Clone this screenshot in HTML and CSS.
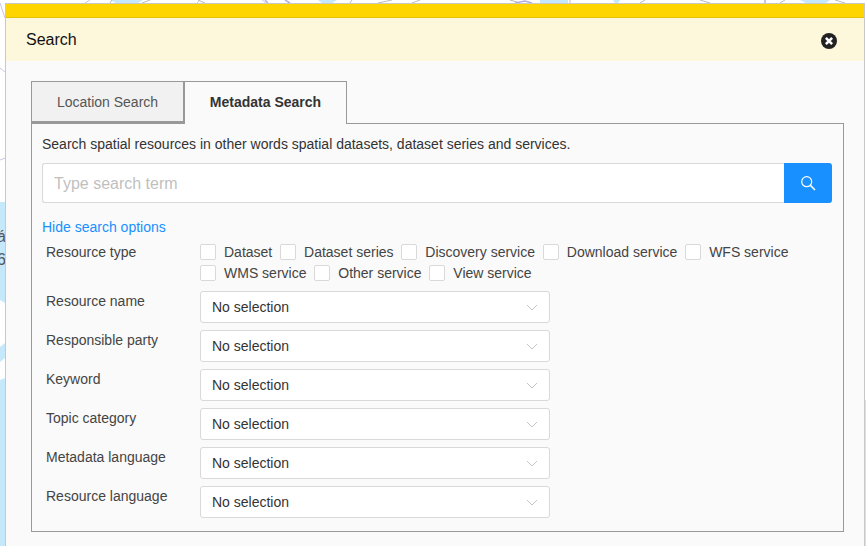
FILE: index.html
```html
<!DOCTYPE html>
<html lang="en">
<head>
  <meta charset="UTF-8">
  <title>Search</title>
  <link rel="stylesheet" href="styles.css">
</head>
<body>

  <svg class="map" width="866" height="546" viewBox="0 0 866 546">
    <path class="water" d="M0 202 L5 202 L5 303 L0 300 Z"/>
    <path class="water" d="M0 347 L5 343 L5 358 L0 362 Z"/>
    <path class="water" d="M0 380 L5 378 L5 546 L0 546 Z"/>
    <path class="water" d="M110 0 L143 0 L138 3 L116 3 Z"/>
    <path class="water" d="M318 0 L337 0 L332 3 L322 3 Z"/>
    <path class="water" d="M540 0 L568 0 L568 3 L540 3 Z"/>
    <path class="water" d="M613 0 L620 0 L618 3 L615 3 Z"/>
    <path class="water" d="M800 0 L830 0 L826 3 L806 3 Z"/>
    <path class="water" d="M865 400 L866 400 L866 546 L865 546 Z"/>
    <path class="road" d="M0 3 L5 18 M0 68 L5 72 M0 160 L5 158 M0 236 L5 232 M85 3 L90 0 M197 3 L200 0 M262 0 L266 3"/>
    <path class="road-grey" d="M110 3 L112 0 M142 3 L150 0 M205 3 L198 0 M350 3 L352 0 M378 3 L392 0 M412 3 L420 0 M520 3 L510 0 M570 3 L570 0 M640 3 L645 0 M710 3 L700 0 M780 3 L785 0 M845 3 L835 0"/>
    <path class="road-lilac" d="M265 0 L268 3 M285 0 L290 3 M515 3 L525 1 L532 3 M765 0 L765 3"/>
    <text class="map-label" x="-3" y="242">á</text>
    <text class="map-label" x="-3" y="265">6</text>
  </svg>

  <div class="modal">
    <div class="modal-bar"></div>
    <div class="modal-header">
      <span class="modal-title">Search</span>
      <svg class="close-icon" width="16" height="16" viewBox="0 0 16 16">
        <circle cx="8" cy="8" r="8" fill="#222"/>
        <path d="M4.9 4.9 L11.1 11.1 M11.1 4.9 L4.9 11.1" stroke="#fff" stroke-width="2.6"/>
      </svg>
    </div>

    <div class="modal-body">
      <div class="tabs">
        <div class="tab">Location Search</div>
        <div class="tab tab-active">Metadata Search</div>
      </div>

      <div class="panel">
        <p class="intro">Search spatial resources in other words spatial datasets, dataset series and services.</p>

        <div class="search-row">
          <input class="search-input" type="text" placeholder="Type search term">
          <button class="search-btn">
            <svg width="16" height="16" viewBox="0 0 16 16" fill="none" stroke="#fff" stroke-width="1.2">
              <circle cx="6.7" cy="6.7" r="5"/>
              <path d="M10.4 10.4 L15 15" stroke-width="1.5"/>
            </svg>
          </button>
        </div>

        <a class="toggle-link" href="#">Hide search options</a>

        <div class="option-row option-types">
          <label class="option-label">Resource type</label>
          <div class="checks">
            <span class="check"><i></i>Dataset</span>
            <span class="check"><i></i>Dataset series</span>
            <span class="check"><i></i>Discovery service</span>
            <span class="check"><i></i>Download service</span>
            <span class="check"><i></i>WFS service</span>
            <span class="check"><i></i>WMS service</span>
            <span class="check"><i></i>Other service</span>
            <span class="check"><i></i>View service</span>
          </div>
        </div>

        <div class="option-row">
          <label class="option-label">Resource name</label>
          <div class="select">No selection<svg width="12" height="7" viewBox="0 0 12 7"><path d="M1 1 L6 6 L11 1" fill="none" stroke="#c4c4c4"/></svg></div>
        </div>
        <div class="option-row">
          <label class="option-label">Responsible party</label>
          <div class="select">No selection<svg width="12" height="7" viewBox="0 0 12 7"><path d="M1 1 L6 6 L11 1" fill="none" stroke="#c4c4c4"/></svg></div>
        </div>
        <div class="option-row">
          <label class="option-label">Keyword</label>
          <div class="select">No selection<svg width="12" height="7" viewBox="0 0 12 7"><path d="M1 1 L6 6 L11 1" fill="none" stroke="#c4c4c4"/></svg></div>
        </div>
        <div class="option-row">
          <label class="option-label">Topic category</label>
          <div class="select">No selection<svg width="12" height="7" viewBox="0 0 12 7"><path d="M1 1 L6 6 L11 1" fill="none" stroke="#c4c4c4"/></svg></div>
        </div>
        <div class="option-row">
          <label class="option-label">Metadata language</label>
          <div class="select">No selection<svg width="12" height="7" viewBox="0 0 12 7"><path d="M1 1 L6 6 L11 1" fill="none" stroke="#c4c4c4"/></svg></div>
        </div>
        <div class="option-row">
          <label class="option-label">Resource language</label>
          <div class="select">No selection<svg width="12" height="7" viewBox="0 0 12 7"><path d="M1 1 L6 6 L11 1" fill="none" stroke="#c4c4c4"/></svg></div>
        </div>
      </div>
    </div>
  </div>

</body>
</html>
```

FILE: styles.css
```css
html, body {
  height: 100%;
}
body {
  margin: 0;
  background: #fff;
  font-family: "Liberation Sans", Arial, sans-serif;
  font-size: 14px;
  color: #333;
  overflow: hidden;
}
.map {
  position: absolute;
  left: 0;
  top: 0;
}
.water {
  fill: #c5e8fb;
}
.road {
  fill: none;
  stroke: #c9c6e6;
  stroke-width: 1;
}
.road-grey {
  fill: none;
  stroke: #bbb;
  stroke-width: 1;
}
.road-lilac {
  fill: none;
  stroke: #b4aee8;
  stroke-width: 1.5;
}
.map-label {
  font-size: 16px;
  fill: #555;
}
.modal {
  position: absolute;
  left: 5px;
  top: 3px;
  width: 858px;
  height: 543px;
  border: 1px solid #c8c8c8;
  border-bottom: none;
  background: #fafafa;
}
.modal-bar {
  height: 13px;
  background: #ffd500;
  border-bottom: 1px solid #e6c200;
}
.modal-header {
  height: 43px;
  background: #fdf7db;
  display: flex;
  align-items: center;
  justify-content: space-between;
  padding: 0 27px 0 20px;
}
.modal-title {
  font-size: 16px;
  color: #111;
}
.close-icon {
  margin-top: 3px;
}
.modal-body {
  padding: 20px 20px 0 25px;
}
.tabs {
  display: flex;
  margin-bottom: -1px;
  position: relative;
}
.tab {
  width: 154px;
  height: 42px;
  box-sizing: border-box;
  line-height: 41px;
  text-align: center;
  background: #f1f1f1;
  color: #555;
  border: 1px solid #999;
  border-bottom-width: 2px;
  border-right-width: 2px;
}
.tab-active {
  width: 162px;
  border-left: none;
  border-right-width: 1px;
  border-bottom: none;
  height: 43px;
  background: #fafafa;
  color: #333;
  font-weight: bold;
}
.panel {
  box-sizing: border-box;
  width: 813px;
  height: 409px;
  border: 1px solid #999;
  padding: 12px 10px 0;
}
.intro {
  margin: 0 0 11px;
  line-height: 16px;
}
.search-row {
  display: flex;
  width: 790px;
  height: 40px;
}
.search-input {
  flex: 1;
  box-sizing: border-box;
  height: 40px;
  border: 1px solid #d9d9d9;
  border-right: none;
  border-radius: 3px 0 0 3px;
  padding: 2px 11px 0;
  font-family: inherit;
  font-size: 16px;
  background: #fff;
  outline: none;
}
.search-input::placeholder {
  color: #bfbfbf;
  opacity: 1;
}
.search-btn {
  width: 48px;
  height: 40px;
  border: none;
  padding: 0;
  background: #1890ff;
  border-radius: 0 3px 3px 0;
  display: flex;
  align-items: center;
  justify-content: center;
}
.toggle-link {
  display: block;
  margin-top: 16px;
  line-height: 16px;
  color: #1890ff;
  text-decoration: none;
}
.option-row {
  display: flex;
  margin-top: 7px;
  padding-left: 4px;
}
.option-types {
  margin-top: 9px;
  margin-bottom: 10px;
}
.option-label {
  width: 154px;
  flex: none;
  line-height: 16px;
  margin-top: 2px;
  color: #444;
}
.option-types .option-label {
  margin-top: 0;
}
.checks {
  display: flex;
  flex-wrap: wrap;
  width: 610px;
  row-gap: 5px;
}
.check {
  display: flex;
  align-items: center;
  height: 16px;
  margin-right: 7.8px;
  white-space: nowrap;
  color: #444;
}
.check i {
  box-sizing: border-box;
  width: 16px;
  height: 16px;
  margin-right: 8px;
  background: #fff;
  border: 1px solid #d9d9d9;
  border-radius: 2px;
}
.select {
  box-sizing: border-box;
  width: 350px;
  height: 32px;
  padding: 0 11px;
  display: flex;
  align-items: center;
  justify-content: space-between;
  background: #fff;
  border: 1px solid #d9d9d9;
  border-radius: 3px;
  color: #333;
}
```
